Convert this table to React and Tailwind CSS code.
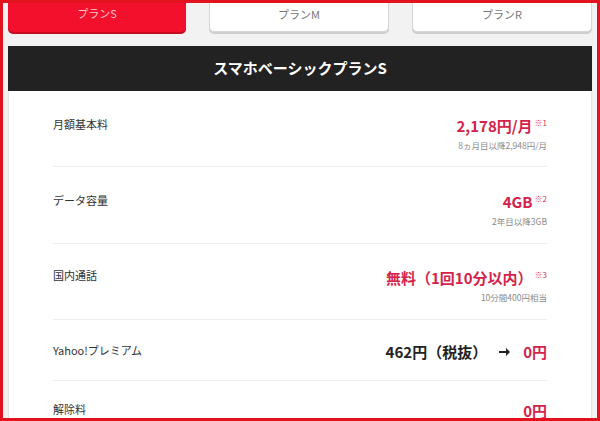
import React from 'react';

const tabs = [
  { name: 'プランS', active: true },
  { name: 'プランM' },
  { name: 'プランR' },
];

const Note = ({ children }) => (
  <span className="ml-[2px] align-top text-[8px] leading-[14px] font-normal text-[#d8325a]">{children}</span>
);

const Row = ({ label, children, sub, className = '' }) => (
  <div className={`flex items-start justify-between border-b border-[#eeeeee] ${className}`}>
    <span className="text-[11px] leading-[16px] text-[#333]">{label}</span>
    <div className="flex flex-col items-end">
      {children}
      {sub && <span className="mt-[3px] text-[8.5px] leading-[12px] text-[#8a8a8a]">{sub}</span>}
    </div>
  </div>
);

const Value = ({ children }) => (
  <span className="text-[15px] leading-[20px] font-bold text-[#d3234b]">{children}</span>
);

export default function App() {
  return (
    <div className="w-[600px] h-[421px] overflow-hidden border-[3px] border-[#e3121f] bg-[#f2f2f2] font-['Noto_Sans_CJK_JP','Noto_Sans',sans-serif]">
      <div className="px-[5px]">
        {/* Tabs */}
        <div className="flex gap-[23px] -mt-[6px]">
          {tabs.map((t) => (
            <div
              key={t.name}
              className={`flex-1 h-[35px] rounded-[5px] flex justify-center pt-[9px] text-[11px] leading-[14px] ${
                t.active
                  ? 'bg-[#f2102d] text-[#ffc4cc] shadow-[0_2px_0_#c40c22]'
                  : 'bg-white text-[#777] border border-[#d6d6d6] shadow-[0_2px_0_#cfcfcf]'
              }`}
            >
              {t.name}
            </div>
          ))}
        </div>

        {/* Plan header */}
        <div className="mt-[14px] h-[45px] bg-[#222] flex items-center justify-center text-white text-[15px] font-bold">
          スマホベーシックプランS
        </div>

        {/* Details */}
        <div className="bg-white px-[44px] border-x border-[#e4e4e4]">
          <Row label="月額基本料" sub="8ヵ月目以降2,948円/月" className="pt-[25px] pb-[15px]">
            <div className="flex items-start">
              <Value>2,178円/月</Value>
              <Note>※1</Note>
            </div>
          </Row>
          <Row label="データ容量" sub="2年目以降3GB" className="pt-[25px] pb-[16px]">
            <div className="flex items-start">
              <Value>4GB</Value>
              <Note>※2</Note>
            </div>
          </Row>
          <Row label="国内通話" sub="10分間400円相当" className="pt-[23px] pb-[16px]">
            <div className="flex items-start pt-[1px]">
              <Value>無料（1回10分以内）</Value>
              <Note>※3</Note>
            </div>
          </Row>
          <Row label="Yahoo!プレミアム" className="pt-[22px] pb-[18px]">
            <div className="flex items-center">
              <span className="text-[15px] leading-[20px] font-bold text-[#222]">462円（税抜）</span>
              <svg className="ml-[12px] mr-[13px]" width="11" height="8" viewBox="0 0 11 8">
                <path d="M0 3h7V0l4 4-4 4V5H0z" fill="#222" />
              </svg>
              <Value>0円</Value>
            </div>
          </Row>
          <Row label="解除料" className="pt-[20px] pb-[18px] border-b-0">
            <Value>0円</Value>
          </Row>
        </div>
      </div>
    </div>
  );
}
